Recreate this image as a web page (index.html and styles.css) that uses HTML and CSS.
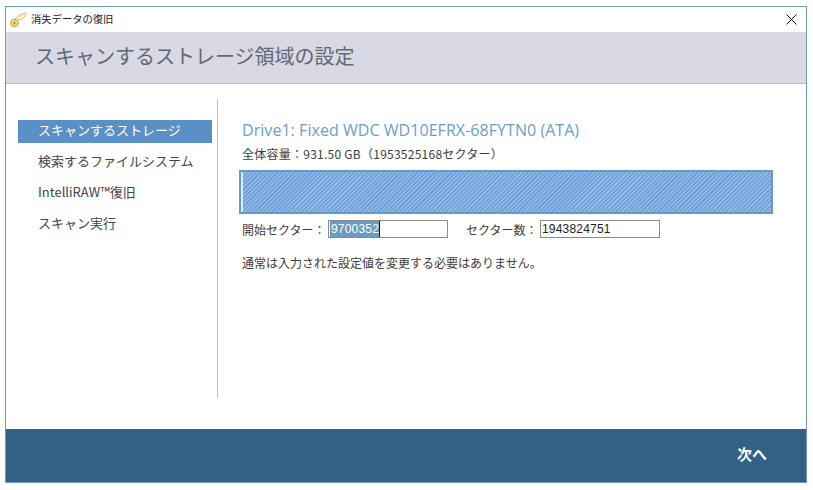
FILE: index.html
```html
<!DOCTYPE html>
<html lang="ja">
<head>
<meta charset="utf-8">
<title>消失データの復旧</title>
<link rel="stylesheet" href="styles.css">
</head>
<body>
<div class="window">
  <div class="titlebar">
    <svg class="app-icon" width="18" height="16" viewBox="0 0 18 16"><path d="M6 7.500C8.500 4 12 2 16.500 1C16.800 3 15.500 5.500 13.500 6.500C12 7.300 10 7.300 8.500 8.500" fill="#fffbe6" stroke="#dcb544" stroke-width="1"/><path d="M9.500 5.500L14.500 3" stroke="#e8cf7a" stroke-width=".8" fill="none"/><circle cx="5.500" cy="11" r="3.800" fill="#f6e08e" stroke="#c9a13a"/><path d="M3.500 11H7.500M5.500 9V13" stroke="#a9862b" stroke-width=".8"/></svg>
    <span class="window-title">消失データの復旧</span>
    <svg class="close" width="13" height="13" viewBox="0 0 13 13"><path d="M1.500 1.500L11.500 11.500M11.500 1.500L1.500 11.500" stroke="#111" stroke-width="1"/></svg>
  </div>
  <header class="header"><h1>スキャンするストレージ領域の設定</h1></header>
  <main class="body">
    <nav class="nav">
      <div class="nav-item active">スキャンするストレージ</div>
      <div class="nav-item">検索するファイルシステム</div>
      <div class="nav-item">IntelliRAW™復旧</div>
      <div class="nav-item">スキャン実行</div>
    </nav>
    <section class="content">
      <h2>Drive1: Fixed WDC WD10EFRX-68FYTN0 (ATA)</h2>
      <p class="capacity">全体容量：931.50 GB（1953525168セクター）</p>
      <div class="bar"><div class="bar-gap"></div><div class="bar-fill"></div></div>
      <div class="fields">
        <span class="label-start">開始セクター：</span>
        <div class="input"><span class="selected">9700352</span><span class="caret"></span></div>
        <span class="label-count">セクター数：</span>
        <div class="input">1943824751</div>
      </div>
      <p class="note">通常は入力された設定値を変更する必要はありません。</p>
    </section>
  </main>
  <footer class="footer"><span class="next">次へ</span></footer>
</div>
</body>
</html>
```

FILE: styles.css
```css
html, body {
  margin: 0;
  padding: 0;
  background: #fff;
}
body {
  padding: 6px 0 0 5px;
  font-family: "Noto Sans CJK JP", "Noto Sans", sans-serif;
  color: #333;
}
.window {
  box-sizing: border-box;
  width: 802px;
  height: 477px;
  border: 1px solid #6f9dbd;
  display: flex;
  flex-direction: column;
  background: #fff;
}
.titlebar {
  height: 25px;
  flex: none;
  display: flex;
  align-items: center;
  padding: 0 8px 0 3px;
}
.app-icon { flex: none; margin-top: 1px; }
.window-title {
  margin: -2px 0 0 4px;
  font-size: 10.300px;
  color: #222;
}
.close { margin-left: auto; flex: none; }
.header {
  height: 52px;
  flex: none;
  box-sizing: border-box;
  background: #d8d9e5;
  border-bottom: 1px solid #bcbcc2;
  display: flex;
  align-items: center;
  padding: 0 0 4px 29px;
}
.header h1 {
  margin: 0;
  font-size: 20px;
  font-weight: 400;
  color: #626874;
}
.body {
  flex: 1;
  display: flex;
  padding-top: 15px;
  min-height: 0;
}
.nav {
  box-sizing: border-box;
  width: 212px;
  height: 299px;
  flex: none;
  padding: 21px 0 0 12px;
  border-right: 1px solid #b9bcc0;
}
.nav-item {
  width: 194px;
  height: 23px;
  margin-bottom: 8px;
  box-sizing: border-box;
  padding-left: 20px;
  font-size: 13px;
  line-height: 19px;
  color: #444;
}
.nav-item.active {
  background: #5b90c6;
  color: #fff;
}
.content {
  flex: 1;
  min-width: 0;
  padding: 21px 0 0 24px;
}
.content h2 {
  margin: 0;
  height: 21px;
  font-family: "Open Sans", sans-serif;
  font-size: 16px;
  line-height: 21px;
  font-weight: 400;
  letter-spacing: .05px;
  color: #6c9ec8;
}
.capacity {
  margin: 5px 0 0;
  height: 16px;
  font-size: 12px;
  line-height: 16px;
  letter-spacing: .25px;
  color: #3c3c3c;
}
.bar {
  box-sizing: border-box;
  margin: 8px 0 0 -3px;
  width: 534px;
  height: 44px;
  border: 2px solid #6699cc;
  display: flex;
  background: #fff;
}
.bar-gap {
  width: 2px;
  background: #d9ecfa;
  flex: none;
}
.bar-fill {
  flex: 1;
  background: repeating-linear-gradient(135deg, #6f9fd8 0, #6f9fd8 1.500px, #93bae4 1.500px, #93bae4 3px);
}
.fields {
  display: flex;
  align-items: center;
  margin-top: 6px;
  height: 18px;
  font-size: 12px;
  color: #3c3c3c;
}
.label-start { width: 86px; flex: none; }
.label-count { margin-left: 18px; width: 74px; flex: none; }
.input {
  box-sizing: border-box;
  width: 120px;
  height: 18px;
  border: 1px solid #8a8a8a;
  display: flex;
  align-items: center;
  padding-left: 1px;
  font-family: "Liberation Sans", sans-serif;
  font-size: 12px;
  letter-spacing: .2px;
  color: #222;
  background: #fff;
}
.selected {
  background: #6a9cc3;
  color: #fff;
  height: 16px;
  line-height: 16px;
  padding-left: 1px;
}
.caret {
  width: 1px;
  height: 16px;
  background: #111;
}
.note {
  margin: 17px 0 0;
  font-size: 12px;
  line-height: 16px;
  color: #3c3c3c;
}
.footer {
  height: 53px;
  flex: none;
  box-sizing: border-box;
  background: #326087;
  display: flex;
  align-items: center;
  justify-content: flex-end;
  padding: 0 39px 4px 0;
}
.next {
  font-size: 15px;
  font-weight: 700;
  color: #fff;
}
```
